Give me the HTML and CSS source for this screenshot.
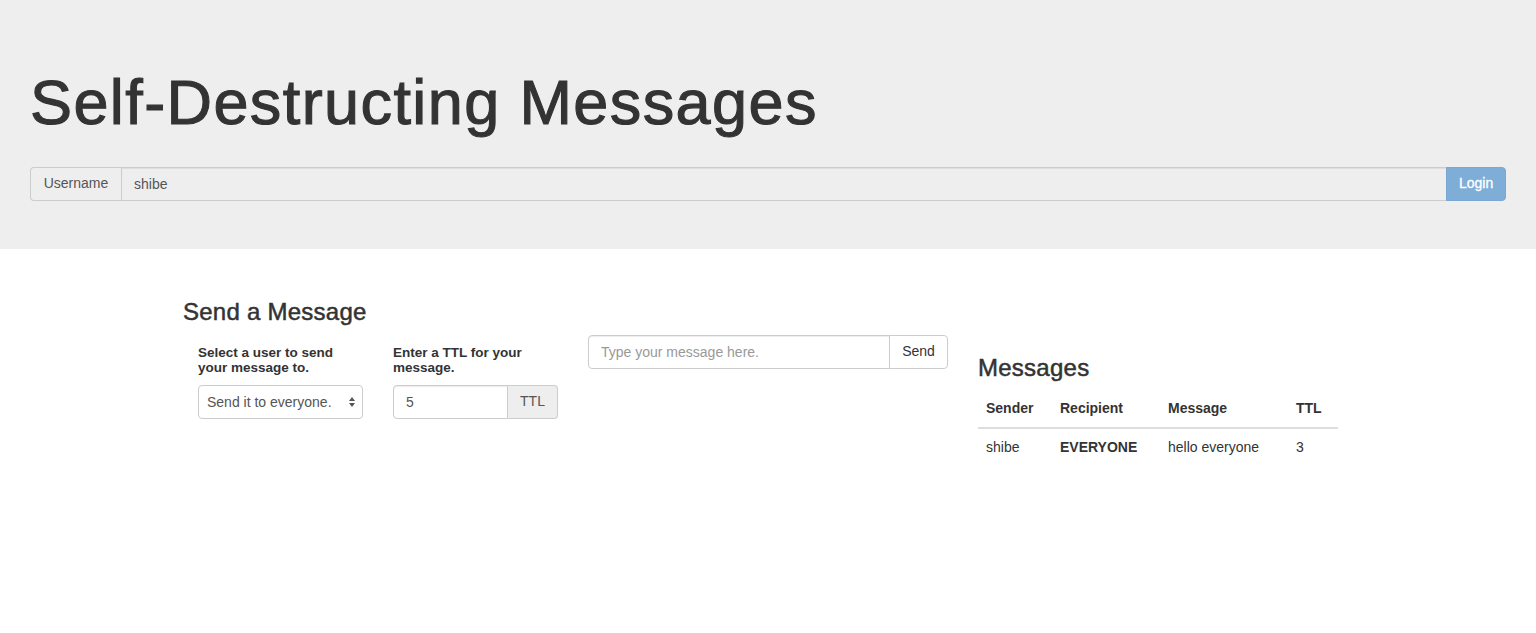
FILE: index.html
```html
<!DOCTYPE html>
<html>
<head>
<meta charset="utf-8">
<title>Self-Destructing Messages</title>
<link rel="stylesheet" href="styles.css">
</head>
<body>
<div class="jumbotron">
  <h1 class="title">Self-Destructing Messages</h1>
  <div class="input-group">
    <span class="addon addon-left">Username</span>
    <input class="field field-grey" type="text" value="shibe" readonly>
    <button class="btn btn-login" type="button">Login</button>
  </div>
</div>
<div class="main">
  <h3 class="heading">Send a Message</h3>
  <div class="cols">
    <div class="col">
      <h5 class="label">Select a user to send your message to.</h5>
      <div class="select-wrap">
        <select class="select">
          <option>Send it to everyone.</option>
        </select>
        <svg class="select-arrows" width="8" height="12" viewBox="0 0 8 12"><path d="M4 1 L7 5 L1 5 Z M4 11 L7 7 L1 7 Z" fill="#555"/></svg>
      </div>
    </div>
    <div class="col">
      <h5 class="label">Enter a TTL for your message.</h5>
      <div class="input-group">
        <input class="field field-left" type="text" value="5">
        <span class="addon addon-right ttl-addon">TTL</span>
      </div>
    </div>
    <div class="col">
      <div class="input-group">
        <input class="field field-left" type="text" placeholder="Type your message here.">
        <button class="btn btn-send" type="button">Send</button>
      </div>
    </div>
    <div class="col">
      <h3 class="heading messages-heading">Messages</h3>
      <table class="table">
        <thead>
          <tr><th class="c1">Sender</th><th class="c2">Recipient</th><th class="c3">Message</th><th class="c4">TTL</th></tr>
        </thead>
        <tbody>
          <tr><td>shibe</td><td><strong>EVERYONE</strong></td><td>hello everyone</td><td>3</td></tr>
        </tbody>
      </table>
    </div>
  </div>
</div>
</body>
</html>
```

FILE: styles.css
```css
* { box-sizing: border-box; }

body {
  margin: 0;
  font-family: "Liberation Sans", Helvetica, Arial, sans-serif;
  font-size: 14px;
  line-height: 1.428571;
  color: #333;
  background: #fff;
}

.jumbotron {
  background: #eee;
  padding: 48px 30px;
  margin-bottom: 30px;
}

.title {
  margin: 20px 0 30px;
  font-size: 63px;
  line-height: 1.1;
  font-weight: 500;
  color: #333;
  letter-spacing: 1.4px;
  -webkit-text-stroke: 1.1px #333;
}

.input-group {
  display: flex;
  height: 34px;
}

.addon {
  display: flex;
  align-items: center;
  justify-content: center;
  padding: 6px 12px;
  font-size: 14px;
  color: #555;
  background: #eee;
  border: 1px solid #ccc;
}

.addon-left {
  border-radius: 4px 0 0 4px;
  border-right: 0;
  width: 91px;
}

.addon-right {
  border-radius: 0 4px 4px 0;
  border-left: 0;
}

.ttl-addon {
  width: 50px;
  flex: none;
}

.field {
  flex: 1;
  min-width: 0;
  height: 34px;
  padding: 6px 12px;
  font-family: inherit;
  font-size: 14px;
  color: #555;
  background: #fff;
  border: 1px solid #ccc;
  box-shadow: inset 0 1px 1px rgba(0,0,0,.075);
  outline: none;
}

.field::placeholder { color: #999; }

.field-grey {
  background: #eee;
}

.field-left {
  border-radius: 4px 0 0 4px;
}

.btn {
  flex: none;
  height: 34px;
  padding: 6px 12px;
  font-family: inherit;
  font-size: 14px;
  line-height: 1.428571;
  border: 1px solid transparent;
  border-radius: 0 4px 4px 0;
  cursor: pointer;
}

.btn-login {
  width: 60px;
  color: #fff;
  background: #7eaed7;
  border-color: #78a8d3;
  margin-left: -1px;
  -webkit-text-stroke: 0.3px #fff;
}

.btn-send {
  width: 59px;
  color: #333;
  background: #fff;
  border-color: #ccc;
  margin-left: -1px;
}

.main {
  width: 1170px;
  margin: 0 auto;
  display: flow-root;
}

.heading {
  margin: 20px 0 9px;
  font-size: 24px;
  line-height: 1.1;
  font-weight: 500;
  letter-spacing: 0.25px;
  -webkit-text-stroke: 0.5px #333;
}

.cols {
  display: grid;
  grid-template-columns: 195px 195px 390px 390px;
}

.col {
  padding: 0 15px;
}

.label {
  margin: 11px 0 10px;
  font-size: 13.5px;
  line-height: 1.1;
  font-weight: bold;
  color: #333;
}

.select-wrap {
  position: relative;
  height: 34px;
}

.select {
  -webkit-appearance: none;
  appearance: none;
  width: 100%;
  height: 34px;
  padding: 6px 24px 6px 8px;
  font-family: inherit;
  font-size: 14px;
  color: #555;
  background: #fff;
  border: 1px solid #ccc;
  border-radius: 4px;
  outline: none;
}

.select-arrows {
  position: absolute;
  right: 7px;
  top: 11px;
  pointer-events: none;
}

.messages-heading {
  margin-top: 20px;
  margin-bottom: 10px;
}

.table {
  width: 360px;
  border-collapse: collapse;
  border-spacing: 0;
  table-layout: fixed;
}

.table th,
.table td {
  padding: 8px;
  text-align: left;
  line-height: 1.428571;
  vertical-align: bottom;
}

.table td {
  padding-top: 9px;
}

.table th {
  font-weight: bold;
  border-bottom: 2px solid #ddd;
}

.c1 { width: 74px; }
.c2 { width: 108px; }
.c3 { width: 128px; }
.c4 { width: 50px; }
```
